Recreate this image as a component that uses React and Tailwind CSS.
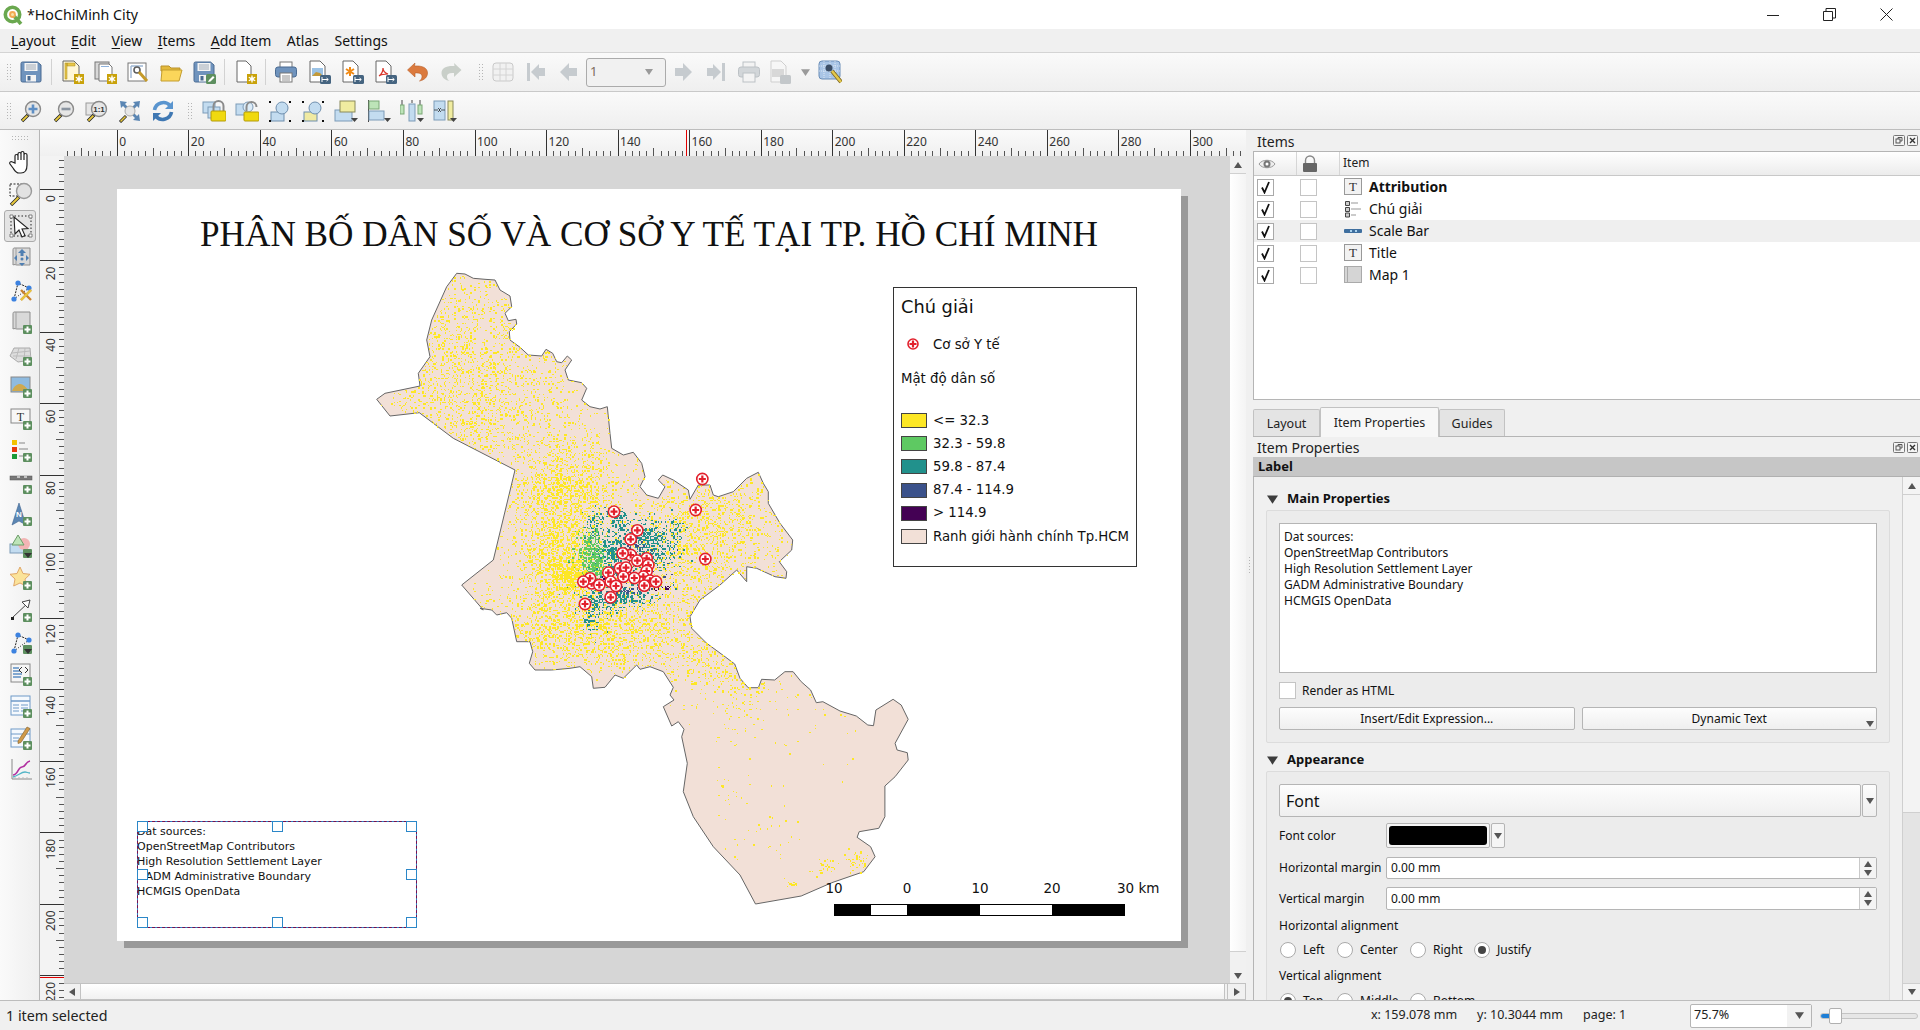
import React, { useMemo } from 'react';

// ---------- map geometry (traced from the layout page, absolute screen px) ----------
const north = [[290,40],[315,42],[340,55],[375,58],[405,60],[420,90],[450,108],[455,140],[435,160],[445,182],[468,178],[470,192],[448,215],[450,240],[480,262],[505,285],[545,288],[558,268],[578,280],[590,305],[605,308],[622,288],[635,300],[615,330],[625,360],[665,368],[680,385],[665,420],[690,440],[720,447],[742,440],[750,520],[755,565],[790,585],[820,577],[845,610],[855,650],[840,680],[860,705],[895,715],[915,680],[895,660],[908,645],[940,660],[985,690],[990,718],[1015,675],[1050,675],[1060,705],[1075,710],[1120,695],[1160,655],[1195,637],[1210,670],[1225,695],[1225,730],[1260,790],[1298,840],[1295,870],[1258,905],[1280,935],[1278,955],[1245,950],[1190,925],[1160,920],[1160,965],[1130,930],[1080,975],[1020,1020],[990,1070],[995,1105],[1040,1150],[1095,1190]].map(([x, y]) => [360 + x / 3, 260 + y / 3]);
const south = [[232,72],[245,115],[265,143],[290,143],[298,118],[330,120],[355,95],[375,95],[395,125],[418,150],[432,188],[448,185],[490,213],[530,228],[558,255],[572,257],[578,210],[620,178],[640,195],[657,238],[625,310],[630,330],[655,338],[657,360],[625,410],[600,438],[600,530],[585,565],[537,575],[532,592],[565,620],[576,650],[548,695],[470,728],[395,768],[283,792]].map(([x, y]) => [640 + x / 2.45, 640 + y / 3]);
const back = [[780,825],[700,740],[640,650],[610,575],[622,490],[605,410],[612,388],[595,365],[575,378],[550,320],[582,300],[570,285],[580,262],[550,215],[510,200],[480,208],[470,195],[430,235],[405,225],[375,262],[340,265],[335,230],[300,200],[270,205],[215,210],[165,210],[148,190],[158,155],[150,125],[110,125],[95,55],[80,38],[50,45],[35,30],[0,25]].map(([x, y]) => [480 + x / 3, 600 + y / 3]);
const west = [[370,1050],[305,975],[400,900],[465,630],[280,535],[178,458],[90,468],[50,418],[75,400],[180,378],[175,340],[210,290],[200,240],[215,180],[260,80]].map(([x, y]) => [360 + x / 3, 260 + y / 3]);
const boundary = [...north, ...south, ...back, ...west];

const markers = [[1027,657],[1007,750],[1036,897],[762,755],[832,811],[812,838],[812,885],[860,895],[865,915],[780,925],[860,933],[850,950],[870,962],[788,880],[832,902],[798,923],[745,938],[790,950],[823,954],[888,965],[853,977],[695,970],[752,965],[690,955],[670,965],[718,975],[768,978],[752,1012],[675,1032]].map(([x, y]) => [360 + x / 3, 260 + y / 3]);

const yellowSpots = [[480,400,55,60,1900],[440,340,35,40,500],[560,555,22,25,1200],[567,490,26,24,1100],[573,577,8,8,350],[570,630,50,24,1300],[640,630,40,22,600],[710,520,34,34,1100],[680,560,30,26,400],[730,650,22,24,260],[700,650,24,30,200],[800,700,40,30,70],[745,690,14,18,90],[856,860,7,5,40],[824,867,7,5,30],[791,883,4,2,14],[730,780,12,40,30],[760,835,20,20,30]];
const tealSpots = [[613,517,10,5,90],[643,533,15,8,220],[653,547,12,10,220],[610,553,8,10,220],[600,600,12,8,230],[627,597,15,5,130],[590,620,5,8,45],[677,530,5,7,30],[593,527,5,8,50],[630,565,22,14,200]];
const greenSpots = [[590,553,7,11,320],[597,567,5,6,110]];
const navySpots = [[623,590,12,2,40],[633,545,5,4,30],[640,575,14,8,60]];
const purpleSpots = [[660,587,5,1,18],[603,578,4,1,12]];

function makeRandom(seed) {
  let a = seed;
  return () => {
    a = (a + 0x6d2b79f5) | 0;
    let t = Math.imul(a ^ (a >>> 15), 1 | a);
    t = (t + Math.imul(t ^ (t >>> 7), 61 | t)) ^ t;
    return ((t ^ (t >>> 14)) >>> 0) / 4294967296;
  };
}

function inside(x, y) {
  let hit = false;
  for (let i = 0, j = boundary.length - 1; i < boundary.length; j = i++) {
    const [xi, yi] = boundary[i];
    const [xj, yj] = boundary[j];
    if (yi > y !== yj > y && x < ((xj - xi) * (y - yi)) / (yj - yi) + xi) hit = !hit;
  }
  return hit;
}

function scatter(spots, seed, uniform = 0) {
  const rand = makeRandom(seed);
  const gauss = () => Math.sqrt(-2 * Math.log(rand() + 1e-6)) * Math.cos(6.2832 * rand());
  let d = '';
  const put = (x, y) => {
    if (!inside(x, y)) return;
    const px = Math.round(x / 1.34) * 1.34 - 117;
    const py = Math.round(y / 1.34) * 1.34 - 189;
    d += `M${px.toFixed(1)} ${py.toFixed(1)}h1.4v1.4h-1.4z`;
  };
  spots.forEach(([cx, cy, sx, sy, n]) => {
    for (let i = 0; i < n; i++) put(cx + gauss() * sx, cy + gauss() * sy);
  });
  for (let i = 0; i < uniform; i++) put(375 + rand() * 420, 272 + rand() * 390);
  return d;
}

// ---------- small drawing helpers ----------
const PlusBadge = ({ x = 14, y = 15 }) => (
  <g>
    <rect x={x} y={y} width="9" height="9" rx="1" fill="#5d8f5f" />
    <path d={`M${x + 4.5} ${y + 1.5}v6M${x + 1.5} ${y + 4.5}h6`} stroke="#fff" strokeWidth="2" />
  </g>
);
const GearBadge = () => (
  <g>
    <rect x="14" y="14" width="10" height="10" fill="#c9a20a" />
    <path d="M19 15.5v7M15.8 17.2l6.4 3.6M22.2 17.2l-6.4 3.6" stroke="#fff" strokeWidth="1.3" />
    <circle cx="19" cy="19" r="1.8" fill="#fff" />
  </g>
);
const ExportBadge = () => (
  <g>
    <rect x="13" y="15" width="11" height="9" rx="1.5" fill="#456480" />
    <path d="M15 17v5M15 19.5h6M19.5 18l1.8 1.5-1.8 1.5" stroke="#fff" strokeWidth="1" fill="none" />
  </g>
);
const Lens = ({ children }) => (
  <g>
    <path d="M3 22l7-7" stroke="#222" strokeWidth="3.4" />
    <path d="M3.4 21.6l5-5" stroke="#e8c93e" strokeWidth="2" />
    <circle cx="14" cy="10" r="7.5" fill="#e6e6e6" stroke="#8a8a8a" strokeWidth="1.4" />
    {children}
  </g>
);
const Doc = ({ x = 4, y = 1, w = 14, h = 20, fill = '#fff' }) => (
  <path d={`M${x} ${y}h${w - 5}l5 5v${h - 5}h-${w}z`} fill={fill} stroke="#666" strokeWidth="1" />
);
const Floppy = ({ children }) => (
  <g>
    <path d="M2 3.5a1.5 1.5 0 0 1 1.5-1.5h15l3.5 3v15.5a1.5 1.5 0 0 1-1.5 1.5h-17a1.5 1.5 0 0 1-1.5-1.5z" fill="#6f93bd" stroke="#4a6b92" />
    <rect x="5.5" y="3" width="13" height="8" fill="#f4f4f4" />
    <path d="M7 5h10M7 7h10M7 9h10" stroke="#8e9aa8" strokeWidth=".8" />
    <rect x="7" y="15" width="10" height="6.5" fill="#f4f4f4" />
    <rect x="8.5" y="16" width="3" height="4.5" fill="#4a6b92" />
    {children}
  </g>
);
const NodeTriangle = ({ children }) => (
  <g>
    <path d="M5 21L9 5l11 5" fill="none" stroke="#222" strokeWidth="1" strokeDasharray="2 1" />
    <path d="M5 21l15-11" stroke="#222" strokeWidth="1" strokeDasharray="1 1.5" />
    <circle cx="9" cy="5" r="2.6" fill="#3c82e0" />
    <circle cx="20" cy="10" r="2.6" fill="#3c82e0" />
    <circle cx="5" cy="21" r="2.6" fill="#3c82e0" />
    {children}
  </g>
);
const MapSheet = () => (
  <g>
    <path d="M5 2h16v17H7.5c-2-1-3.5 0-3.5 0V4c0-1 .4-2 1-2z" fill="#d9d9d9" stroke="#8d8d8d" />
    <path d="M7 2v17" stroke="#9f9f9f" />
  </g>
);
const LockBody = ({ x = 9, y = 12 }) => (
  <g>
    <path d={`M${x + 2.5} ${y}v-5a5 5 0 0 1 10 0v5`} fill="none" stroke="#8b8b8b" strokeWidth="2" />
    <rect x={x} y={y} width="15" height="10" rx="1" fill="#f0d90f" stroke="#b49b0b" />
  </g>
);
const DropMark = () => <path d="M17 19h7l-3.5 4z" fill="#444" />;

const icons = {
  save: <Floppy />,
  newLayout: <g><Doc x="3" y="1" w="16" h="20" fill="#fff7d6" /><path d="M5 3h2v16H5zM7 3h8v3H7z" fill="#e9c648" stroke="#a58a1f" strokeWidth=".5" /><GearBadge /></g>,
  duplicate: <g><rect x="2" y="2" width="14" height="17" fill="#d8d8d8" stroke="#777" /><path d="M6 4h10l3 3v14H6z" fill="#fff" stroke="#777" /><path d="M8 6h8v1H8z" fill="#8fb3dd" /><GearBadge /></g>,
  manager: <g><rect x="2" y="3" width="18" height="18" fill="#fff" stroke="#777" /><path d="M5 6h12M5 6v12" stroke="#9db6d3" strokeWidth="1.4" /><circle cx="11" cy="10" r="3" fill="none" stroke="#5d5d5d" strokeWidth="1.6" /><path d="M13 12l8 9" stroke="#c59a28" strokeWidth="3" /></g>,
  open: <g><path d="M2 6h8l2 2h9v3H2z" fill="#e3b93b" stroke="#b9912a" /><path d="M3 10h20l-3 11H2z" fill="#fbd65a" stroke="#c39d2f" /></g>,
  saveAs: <Floppy><rect x="14" y="14" width="10" height="10" rx="1.5" fill="#5d8f5f" /><path d="M16 22l1-2 4-4 1.5 1.5-4 4z" fill="#fff" /></Floppy>,
  newTemplate: <g><Doc x="4" y="1" w="14" h="21" /><GearBadge /></g>,
  print: <g><rect x="6" y="2" width="12" height="6" fill="#fff" stroke="#777" /><rect x="1.5" y="7" width="21" height="10" rx="2.5" fill="#6f93bd" stroke="#4a6b92" /><rect x="6" y="13" width="12" height="9" fill="#fff" stroke="#777" /><path d="M8 16h8M8 18h8M8 20h8" stroke="#777" strokeWidth=".8" /></g>,
  exportImage: <g><Doc x="3" y="1" w="15" h="21" /><rect x="5" y="8" width="11" height="8" fill="#9cc3e6" /><path d="M5 16l4-4 4 1 3 3z" fill="#c39a3a" /><ExportBadge /></g>,
  exportSvg: <g><Doc x="3" y="1" w="15" h="21" /><path d="M10 7v9M6 9l8 5M14 9l-8 5" stroke="#f08a16" strokeWidth="2" /><ExportBadge /></g>,
  exportPdf: <g><Doc x="3" y="1" w="15" h="21" /><path d="M6 16c3-2 4-5 4-8 0 3 2 5 5 6-3 0-6 0-9 2z" fill="none" stroke="#d8342a" strokeWidth="1.2" /><ExportBadge /></g>,
  undo: <path d="M9 3L1.5 10 9 17v-4c5-.5 7 1 7 3.5 0 2-1 3.5-2.500 4.500 5-1 8-4 8-8 0-5-5-7.500-13-7z" fill="#db7a3e" stroke="#b85f2a" strokeWidth=".6" />,
  redo: <path d="M15 3l7.500 7L15 17v-4c-5-.5-7 1-7 3.500 0 2 1 3.500 2.500 4.500-5-1-8-4-8-8 0-5 5-7.500 13-7z" fill="#c9cfc9" />,
  atlas: <g><rect x="2" y="3" width="20" height="18" rx="3" fill="#f1f1f1" stroke="#c9c9c9" /><path d="M9 3v18M15 3v18M2 9h20M2 15h20" stroke="#d4d4d4" /></g>,
  first: <path d="M3 3h3v18H3zM7 12l8-8v4h6v8h-6v4z" fill="#c6cbcf" />,
  prev: <path d="M3 12l9-9v5h8v8h-8v5z" fill="#c6cbcf" />,
  next: <path d="M21 12l-9-9v5H4v8h8v5z" fill="#c6cbcf" />,
  last: <path d="M21 3h-3v18h3zM17 12l-8-8v4H3v8h6v4z" fill="#c6cbcf" />,
  printOff: <g fill="#d2d6d9" stroke="#bcc1c5"><rect x="6" y="2" width="12" height="6" fill="#f3f3f3" /><rect x="1.5" y="7" width="21" height="10" rx="2.5" /><rect x="6" y="13" width="12" height="9" fill="#f3f3f3" /></g>,
  exportOff: <g><path d="M3 1h10l5 5v16H3z" fill="#f6f6f6" stroke="#cfcfcf" /><rect x="4" y="9" width="12" height="8" fill="#d8d8d8" /><rect x="12" y="15" width="11" height="9" rx="1.5" fill="#c3c7ca" /></g>,
  atlasSettings: <g><rect x="1" y="1" width="21" height="18" rx="3" fill="#a9c5e6" stroke="#6b8eb8" /><path d="M6 1v18M12 1v18M17 1v18M1 6h21M1 11h21" stroke="#fff" strokeWidth=".6" strokeDasharray="1 1" /><circle cx="11" cy="8" r="3.500" fill="#3c4e66" /><path d="M14 11l9 11" stroke="#7a6420" strokeWidth="4" /><path d="M14 11l9 11" stroke="#e3c84a" strokeWidth="2.500" /></g>,
  zoomIn: <Lens><path d="M14 5.500v9M9.500 10h9" stroke="#5f8fc4" strokeWidth="2.600" /></Lens>,
  zoomOut: <Lens><path d="M9.500 10h9" stroke="#8a94a0" strokeWidth="2.600" /></Lens>,
  zoom100: <g><rect x="1" y="4" width="13" height="12" fill="#e6e6e6" stroke="#9a9a9a" /><Lens><text x="14" y="13" textAnchor="middle" fontSize="8" fontWeight="700" fontFamily="Liberation Sans" fill="#333">1:1</text></Lens></g>,
  zoomFull: <g><path d="M2 2l7 1-2 2 3 3-2 2-3-3-2 2zM22 2l-1 7-2-2-3 3-2-2 3-3-2-2zM22 22l-7-1 2-2-3-3 2-2 3 3 2-2z" fill="#5b86b3" /><circle cx="12" cy="12" r="5" fill="#e6e6e6" stroke="#aaa" /><path d="M2 23l6-6" stroke="#222" strokeWidth="3" /><path d="M2.500 22.500l5-5" stroke="#e8c93e" strokeWidth="1.600" /></g>,
  refresh: <g fill="none" strokeWidth="3.600"><path d="M3.500 11A9 9 0 0 1 19 6.500" stroke="#5a95cf" /><path d="M20.500 13A9 9 0 0 1 5 17.500" stroke="#3f78b3" /><path d="M22 2v8h-8z" fill="#5a95cf" stroke="none" /><path d="M2 22v-8h8z" fill="#3f78b3" stroke="none" /></g>,
  group: <g><rect x="1" y="3" width="12" height="11" fill="#c3dcf0" stroke="#7d9bb8" /><rect x="6" y="8" width="12" height="11" fill="#c3dcf0" stroke="#7d9bb8" /><LockBody /></g>,
  ungroup: <g><rect x="1" y="5" width="11" height="11" fill="#c3dcf0" stroke="#7d9bb8" /><circle cx="13" cy="8" r="5" fill="#dcecf8" stroke="#7d9bb8" /><path d="M11.500 12V8a5 5 0 0 1 10 0" fill="none" stroke="#8b8b8b" strokeWidth="2" /><rect x="9" y="13" width="15" height="9" rx="1" fill="#f0d90f" stroke="#b49b0b" /></g>,
  selectAll: <g><rect x="3" y="13" width="13" height="9" fill="#c3dcf0" stroke="#6f8fae" /><circle cx="14" cy="9" r="6" fill="#c3dcf0" stroke="#6f8fae" /><path d="M1 2h2v2H1zM21 2h2v2h-2zM1 21h2v2H1zM21 21h2v2h-2z" fill="#111" /></g>,
  selectInv: <g><rect x="3" y="13" width="13" height="9" fill="#f0eaa2" stroke="#6f8fae" /><circle cx="14" cy="9" r="6" fill="#c3dcf0" stroke="#6f8fae" /><path d="M1 2h2v2H1zM21 2h2v2h-2zM1 21h2v2H1zM21 21h2v2h-2z" fill="#111" /></g>,
  raise: <g><rect x="1" y="11" width="17" height="11" fill="#c3dcf0" stroke="#7d9bb8" /><rect x="6" y="2" width="15" height="11" fill="#f0eca0" stroke="#8a8a5a" /><DropMark /></g>,
  alignLeft: <g><path d="M1.500 1v22" stroke="#444" /><rect x="2" y="2" width="10" height="8" fill="#bde4b8" stroke="#7ba876" /><rect x="2" y="12" width="15" height="9" fill="#c3dcf0" stroke="#7d9bb8" /><DropMark /></g>,
  distribute: <g><path d="M2 1v7M12 1v3M20 1v5" stroke="#444" /><rect x="0" y="6" width="4" height="9" fill="#bde4b8" stroke="#7ba876" /><rect x="9" y="5" width="6" height="17" fill="#c3dcf0" stroke="#7d9bb8" /><rect x="18" y="6" width="4" height="9" fill="#bde4b8" stroke="#7ba876" /><DropMark /></g>,
  resize: <g><rect x="1" y="2" width="11" height="19" fill="#c3dcf0" stroke="#7d9bb8" /><rect x="15" y="2" width="5" height="19" fill="#f0eca0" stroke="#8a8a5a" /><path d="M1 11h4M12 11H8M5 9l2 2-2 2M8 9l-2 2 2 2" stroke="#333" fill="none" strokeWidth=".8" /><DropMark /></g>,
  hand: <path d="M6 13V6a1.500 1.500 0 0 1 3 0v4-6a1.500 1.500 0 0 1 3 0v6-7a1.500 1.500 0 0 1 3 0v7-5a1.500 1.500 0 0 1 3 0v10c0 5-2 8-6 8h-2c-3 0-4-2-6-5l-3-4c-1-2 1-3 2.500-2z" fill="#fff" stroke="#222" strokeWidth="1.200" />,
  zoomBox: <g><rect x="1" y="2" width="12" height="12" fill="none" stroke="#222" strokeDasharray="2 1.500" /><path d="M2 23l8-8" stroke="#222" strokeWidth="3.400" /><path d="M2.500 22.500l7-7" stroke="#e8c93e" strokeWidth="2" /><circle cx="15" cy="9" r="7.500" fill="#e2e2e2" stroke="#999" strokeWidth="1.400" /></g>,
  select: <g><rect x="2" y="2" width="20" height="20" fill="none" stroke="#222" strokeDasharray="1.500 2" /><path d="M1 1h3v3H1zM20 1h3v3h-3zM1 20h3v3H1zM20 20h3v3h-3z" fill="#fff" stroke="#555" strokeWidth=".7" /><path d="M5 3l1 17 4-4 3 7 3-1.500-3-6.500 6-.5z" fill="#fff" stroke="#222" strokeWidth="1.100" /></g>,
  moveContent: <g><MapSheet /><path d="M13 3l4 4h-2.500v3h-3V7H9zM13 20l-3-3h6zM5 12l3-3v6zM20 12l-3-3v6z" fill="#4f7fb2" /><circle cx="13" cy="13" r="1.500" fill="#4f7fb2" /></g>,
  editNodes: <NodeTriangle><path d="M12 12l10 10M22 12L12 22" stroke="#c8832f" strokeWidth="2.400" /><path d="M22 12L12 22" stroke="#e7c53f" strokeWidth="2.400" /></NodeTriangle>,
  addMap: <g><MapSheet /><PlusBadge /></g>,
  add3d: <g><path d="M5 6h16l1 12-13 2-8-6z" fill="#ddd" stroke="#aaa" /><path d="M10 6L7 17M16 6l-1 13M3 11l18-2M4 14l18 0" stroke="#bbb" fill="none" /><PlusBadge /></g>,
  addPicture: <g><rect x="2" y="3" width="19" height="15" fill="#8fbbe0" stroke="#888" /><path d="M3 17c2-5 5-7 8-7 3 0 6 3 9 7z" fill="#cfa94f" /><PlusBadge /></g>,
  addLabel: <g><rect x="2" y="3" width="19" height="14" fill="#f7f7f7" stroke="#888" /><text x="11.500" y="15" textAnchor="middle" fontSize="12" fontFamily="Liberation Serif" fill="#333">T</text><PlusBadge /></g>,
  addLegend: <g><rect x="3" y="2" width="5" height="5" fill="#f2c200" /><rect x="3" y="9" width="5" height="5" fill="#e63a0e" /><rect x="3" y="16" width="5" height="5" fill="#1a9a38" /><path d="M10 5h6M10 11h9M10 18h4" stroke="#aaa" strokeWidth="1.600" /><PlusBadge /></g>,
  addScale: <g><rect x="1" y="6" width="22" height="4" fill="#777" stroke="#555" strokeWidth=".5" /><path d="M8 7h3M15 7h3" stroke="#ddd" strokeWidth="1.400" /><PlusBadge /></g>,
  addNorth: <g><path d="M10 1l7 22-7-4-7 4z" fill="#5b86b3" stroke="#3f6590" strokeWidth=".6" /><text x="10" y="15" textAnchor="middle" fontSize="8" fontWeight="700" fontFamily="Liberation Sans" fill="#fff">N</text><PlusBadge /></g>,
  addShape: <g><rect x="1" y="10" width="17" height="9" fill="#c3dcf0" stroke="#7d9bb8" /><circle cx="15" cy="10" r="6" fill="#f2b4b4" /><path d="M9 1l6 10H3z" fill="#bde4b8" stroke="#6c9c68" /><rect x="14" y="15" width="9" height="9" rx="1" fill="#5d8f5f" /><path d="M15 19h8l-4 5z" fill="#333" /></g>,
  addMarker: <g><path d="M11 1l3 6.500 7 .8-5 4.800 1.300 7L11 17l-6.300 3 1.300-7L1 8.300l7-.8z" fill="#fbe39a" stroke="#e0a769" /><PlusBadge /></g>,
  addArrow: <g><path d="M3 20L20 4" stroke="#444" /><path d="M13 4l8-2-2 8z" fill="#fff" stroke="#444" /><rect x="2" y="19" width="3" height="3" fill="#222" /><PlusBadge /></g>,
  addNode: <NodeTriangle><rect x="14" y="15" width="9" height="9" rx="1" fill="#5d8f5f" /><path d="M15 19h8l-4 5z" fill="#333" /></NodeTriangle>,
  addHtml: <g><rect x="2" y="2" width="19" height="18" fill="#f5f5f5" stroke="#888" /><path d="M4 6h6M4 9h7M4 12h9M4 15h8" stroke="#5c8ec4" strokeWidth="1.600" /><path d="M13 5l-3 3 3 3M16 5l3 3-3 3" fill="none" stroke="#333" /><PlusBadge /></g>,
  addTable: <g><rect x="2" y="2" width="19" height="19" fill="#f5f9fd" stroke="#6f9ac8" /><path d="M2 7h19" stroke="#6f9ac8" strokeWidth="1.500" /><path d="M4 11h6M12 11h7M4 14h6M12 14h7M4 17h6M12 17h3" stroke="#6f9ac8" /><PlusBadge /></g>,
  addFixedTable: <g><rect x="2" y="3" width="19" height="18" fill="#f5f9fd" stroke="#6f9ac8" /><path d="M2 8h19M4 12h6M4 15h6" stroke="#6f9ac8" /><path d="M9 15l9-14 3 1.500-9 14-3 1z" fill="#d09a4a" stroke="#7c5a26" strokeWidth=".6" /><PlusBadge /></g>,
  addChart: <g><path d="M3 1v20h20" stroke="#888" fill="none" /><path d="M4 17c5 0 5-8 9-8 4 0 3-5 8-6" stroke="#b12fa0" strokeWidth="1.600" fill="none" /><path d="M4 19c5-1 8-5 12-5 2 0 3 1 5 1" stroke="#53b5c7" strokeWidth="1.300" fill="none" /><path d="M6 21v-2M10 21v-2M14 21v-2M18 21v-2" stroke="#bbb" /></g>,
};

const Icon = ({ name, size = 24, className = '' }) => (
  <svg width={size} height={size} viewBox="0 0 24 24" className={className}>{icons[name]}</svg>
);

const Tri = ({ dir = 'down', className = 'fill-[#555]', size = 8 }) => {
  const pts = { down: '0,1 8,1 4,7', up: '0,7 8,7 4,1', left: '7,0 7,8 1,4', right: '1,0 1,8 7,4' }[dir];
  return <svg width={size} height={size} viewBox="0 0 8 8" className={className}><polygon points={pts} /></svg>;
};

const Grip = ({ className = '' }) => (
  <div className={`grid grid-cols-2 gap-x-[2px] gap-y-[2px] ${className}`}>
    {Array.from({ length: 12 }).map((_, i) => <span key={i} className="w-px h-px bg-[#b5b5b5]" />)}
  </div>
);

const Sep = () => <div className="w-px h-[26px] bg-[#d2d2d2] mx-[3.5px]" />;

const Tool = ({ name, disabled, size = 24 }) => (
  <div className={`w-[33px] h-[33px] flex items-center justify-center shrink-0 ${disabled ? 'opacity-70' : ''}`}>
    <Icon name={name} size={size} />
  </div>
);

function TitleBar() {
  return (
    <div className="h-[29px] shrink-0 bg-white flex items-center">
      <svg width="20" height="20" viewBox="0 0 20 20" className="ml-[3px]">
        <circle cx="9.500" cy="9.500" r="7.200" fill="none" stroke="#6aa84f" strokeWidth="3.600" />
        <path d="M11 11l7 8" stroke="#6aa84f" strokeWidth="3.600" />
        <circle cx="9.500" cy="9.500" r="3.400" fill="#f3a953" />
        <circle cx="9.500" cy="9.500" r="1.500" fill="#f6e3a8" />
      </svg>
      <span className="ml-[4px] text-[14.2px] text-[#111]">*HoChiMinh City</span>
      <div className="ml-auto mr-[5px] flex">
        <div className="w-[57px] h-[29px] flex items-center justify-center">
          <svg width="12" height="12" viewBox="0 0 12 12"><path d="M0 6.500h12" stroke="#222" /></svg>
        </div>
        <div className="w-[57px] h-[29px] flex items-center justify-center">
          <svg width="13" height="13" viewBox="0 0 13 13"><path d="M.5 3.500h9v9h-9zM3 3.500V.5h9.500V10H9.500" fill="none" stroke="#222" /></svg>
        </div>
        <div className="w-[57px] h-[29px] flex items-center justify-center">
          <svg width="13" height="13" viewBox="0 0 13 13"><path d="M.5.5l12 12M12.500.5l-12 12" stroke="#222" /></svg>
        </div>
      </div>
    </div>
  );
}

function MenuBar() {
  const items = [['L', 'ayout'], ['E', 'dit'], ['V', 'iew'], ['I', 'tems'], ['A', 'dd Item'], ['', 'Atlas'], ['', 'Settings']];
  return (
    <div className="h-[24px] shrink-0 bg-[#f0f0f0] flex items-center gap-[15.500px] pl-[11px] text-[14px] text-[#111] border-b border-[#d4d4d4]">
      {items.map(([k, rest]) => (
        <span key={k + rest}><span className="underline underline-offset-2">{k}</span>{rest}</span>
      ))}
    </div>
  );
}

function MainToolbar() {
  return (
    <div className="h-[39px] shrink-0 bg-gradient-to-b from-[#fafafa] to-[#efefef] flex items-center border-b border-[#c9c9c9]">
      <Grip className="ml-[7px] mr-[3px]" />
      <Tool name="save" />
      <Sep />
      <Tool name="newLayout" />
      <Tool name="duplicate" />
      <Tool name="manager" />
      <Tool name="open" />
      <Tool name="saveAs" />
      <Sep />
      <Tool name="newTemplate" />
      <Sep />
      <Tool name="print" />
      <Tool name="exportImage" />
      <Tool name="exportSvg" />
      <Tool name="exportPdf" />
      <Tool name="undo" />
      <Tool name="redo" />
      <Grip className="ml-[12px] mr-[3px]" />
      <Tool name="atlas" />
      <Tool name="first" />
      <Tool name="prev" />
      <div className="w-[80px] h-[29px] ml-[1px] border border-[#ababab] rounded-[3px] bg-[#f1f1f1] flex items-center justify-between px-[3px] text-[13px] text-[#7d6a5c]">
        <span>1</span>
        <Tri className="fill-[#9a9a9a] mr-[9px]" />
      </div>
      <Tool name="next" />
      <Tool name="last" />
      <Tool name="printOff" />
      <div className="w-[24px] flex justify-start ml-[3px]"><Icon name="exportOff" /></div>
      <Tri className="fill-[#9a9a9a] ml-[9px] mr-[3.500px]" size={9} />
      <Tool name="atlasSettings" />
    </div>
  );
}

function ItemToolbar() {
  return (
    <div className="h-[38px] shrink-0 bg-gradient-to-b from-[#fafafa] to-[#efefef] flex items-center border-b border-[#bdbdbd]">
      <Grip className="ml-[7px] mr-[3px]" />
      <Tool name="zoomIn" />
      <Tool name="zoomOut" />
      <Tool name="zoom100" />
      <Tool name="zoomFull" />
      <Tool name="refresh" />
      <Grip className="ml-[9px] mr-[5px]" />
      <Tool name="group" />
      <Tool name="ungroup" />
      <Tool name="selectAll" />
      <Tool name="selectInv" />
      <Tool name="raise" />
      <Tool name="alignLeft" />
      <Tool name="distribute" />
      <Tool name="resize" />
    </div>
  );
}

function LeftToolbar() {
  const top = ['hand', 'zoomBox', 'select', 'moveContent', 'editNodes', 'addMap', 'add3d', 'addPicture', 'addLabel', 'addLegend', 'addScale', 'addNorth', 'addShape', 'addMarker', 'addArrow', 'addNode', 'addHtml', 'addTable', 'addFixedTable', 'addChart'];
  return (
    <div className="w-[40px] shrink-0 bg-gradient-to-r from-[#fafafa] to-[#efefef] border-r border-[#b5b5b5] flex flex-col items-center overflow-hidden">
      <div className="h-[16px] flex items-center shrink-0">
        <div className="grid grid-cols-6 gap-[2px]">
          {Array.from({ length: 12 }).map((_, i) => <span key={i} className="w-px h-px bg-[#b5b5b5]" />)}
        </div>
      </div>
      {top.map((n) => (
        <div
          key={n}
          className={`w-[32px] h-[32px] shrink-0 flex items-center justify-center rounded-[3px] ${n === 'select' ? 'bg-[#e4e4e4] border border-[#ababab]' : ''}`}
        >
          <Icon name={n} className="ml-[2px]" />
        </div>
      ))}
    </div>
  );
}

const MM = 3.577;

function TopRuler() {
  const ticks = [];
  for (let mm = -14; mm <= 316; mm += 2) {
    const x = 77.3 + mm * MM;
    if (x < 24) continue;
    const major = mm % 20 === 0;
    const mid = mm % 10 === 0;
    ticks.push(<line key={mm} x1={x} x2={x} y1={major ? 0 : mid ? 18 : 21} y2="26" stroke={major ? '#333' : '#555'} strokeWidth="1" />);
    if (major && mm >= 0) ticks.push(<text key={`t${mm}`} x={x + 2} y="16" fontSize="12" fill="#333">{mm}</text>);
  }
  return (
    <div className="h-[26px] shrink-0 bg-gradient-to-b from-[#fafafa] to-[#f0f0f0] overflow-hidden">
      <svg width="1206" height="26" shapeRendering="crispEdges">
        {ticks}
        <line x1="646.700" x2="646.700" y1="0" y2="26" stroke="#e00000" />
      </svg>
    </div>
  );
}

function LeftRuler() {
  const ticks = [];
  for (let mm = -8; mm <= 226; mm += 2) {
    const y = 33 + mm * MM;
    const major = mm % 20 === 0;
    const mid = mm % 10 === 0;
    ticks.push(<line key={mm} y1={y} y2={y} x1={major ? 0 : mid ? 16 : 19} x2="24" stroke={major ? '#333' : '#555'} />);
    if (major && mm >= 0) {
      ticks.push(
        <text key={`t${mm}`} transform={`translate(15 ${y + 6}) rotate(-90)`} textAnchor="end" fontSize="12" fill="#333">{mm}</text>
      );
    }
  }
  return (
    <div className="w-[24px] shrink-0 bg-[#f3f3f3] overflow-hidden">
      <svg width="24" height="844">
        <g shapeRendering="crispEdges">{ticks}</g>
        <line x1="0" x2="24" y1="821" y2="821" stroke="#e00000" shapeRendering="crispEdges" />
      </svg>
    </div>
  );
}

function MapLayer() {
  const paths = useMemo(() => ({
    yellow: scatter(yellowSpots, 11, 2300),
    green: scatter(greenSpots, 22),
    teal: scatter(tealSpots, 33),
    navy: scatter(navySpots, 44),
    purple: scatter(purpleSpots, 55),
  }), []);
  const outline = boundary.map(([x, y]) => `${(x - 117).toFixed(1)},${(y - 189).toFixed(1)}`).join(' ');
  return (
    <svg width="1064" height="752" className="absolute left-0 top-0">
      <polygon points={outline} fill="#f2e0d7" stroke="#666" strokeWidth="1" strokeLinejoin="round" />
      <path d={paths.yellow} fill="#fde725" shapeRendering="crispEdges" />
      <path d={paths.teal} fill="#21918c" shapeRendering="crispEdges" />
      <path d={paths.green} fill="#5ec962" shapeRendering="crispEdges" />
      <path d={paths.navy} fill="#3b528b" shapeRendering="crispEdges" />
      <path d={paths.purple} fill="#440154" shapeRendering="crispEdges" />
      {markers.map(([x, y], i) => <Marker key={i} x={x - 117} y={y - 189} />)}
    </svg>
  );
}

const Marker = ({ x, y, r = 5.600 }) => (
  <g>
    <circle cx={x} cy={y} r={r} fill="#fff" stroke="#e2202c" strokeWidth="1.600" />
    <path d={`M${x} ${y - 3.500}v7M${x - 3.500} ${y}h7`} stroke="#e2202c" strokeWidth="2.200" />
  </g>
);

function Legend() {
  const rows = [
    ['bg-[#fde725]', '<= 32.3'],
    ['bg-[#5ec962]', '32.3 - 59.8'],
    ['bg-[#21918c]', '59.8 - 87.4'],
    ['bg-[#3b528b]', '87.4 - 114.9'],
    ['bg-[#440154]', '> 114.9'],
    ['bg-[#f2e0d7]', 'Ranh giới hành chính Tp.HCM'],
  ];
  return (
    <div className="absolute left-[776px] top-[98px] w-[244px] h-[280px] bg-white border border-[#333] pl-[7px] text-[#111] font-['DejaVu_Sans',sans-serif] text-[13.300px]">
      <div className="h-[24px] mt-[7px] text-[17.800px] leading-[24px]">Chú giải</div>
      <div className="flex items-center h-[20px] mt-[16px]">
        <svg width="26" height="20" className="-mt-[3px]"><Marker x={12} y={10} r={5} /></svg>
        <span className="ml-[6px]">Cơ sở Y tế</span>
      </div>
      <div className="h-[20px] mt-[14px] leading-[20px]">Mật độ dân số</div>
      <div className="mt-[24px] flex flex-col gap-[8px]">
        {rows.map(([color, label]) => (
          <div key={label} className="flex items-center h-[15.200px]">
            <span className={`w-[26px] h-[15px] border border-[#444] shrink-0 ${color}`} />
            <span className="ml-[6px] whitespace-nowrap">{label}</span>
          </div>
        ))}
      </div>
    </div>
  );
}

function ScaleBar() {
  const labels = [['10', 717], ['0', 790], ['10', 863], ['20', 935]];
  return (
    <div className="absolute left-[717px] top-[689px] w-[330px] h-[40px] font-['DejaVu_Sans',sans-serif] text-[13.500px] text-[#111]">
      {labels.map(([t, x], i) => (
        <span key={i} className="absolute top-0 -translate-x-1/2" style={{ left: x - 717 }}>{t}</span>
      ))}
      <span className="absolute top-0 left-[283px] whitespace-nowrap">30 km</span>
      <div className="absolute left-0 top-[26px] w-[291px] h-[12px] flex border border-black">
        <span className="w-[36px] bg-black" />
        <span className="w-[36px] bg-white" />
        <span className="w-[73px] bg-black" />
        <span className="w-[72px] bg-white" />
        <span className="flex-1 bg-black" />
      </div>
    </div>
  );
}

const Handle = ({ className }) => <span className={`absolute w-[11px] h-[11px] bg-white border border-[#2b87c8] ${className}`} />;

function Attribution() {
  return (
    <div className="absolute left-[20px] top-[632px] w-[280px] h-[107px] font-['DejaVu_Sans',sans-serif] text-[11px] leading-[15px] text-[#111] pt-[3px]">
      <div>Dat sources:</div>
      <div>OpenStreetMap Contributors</div>
      <div>High Resolution Settlement Layer</div>
      <div>GADM Administrative Boundary</div>
      <div>HCMGIS OpenData</div>
      <div className="absolute inset-0 border border-[#2b87c8]" />
      <div className="absolute inset-0 border border-dashed border-[#7a0f4e]" />
      <Handle className="left-0 top-0" />
      <Handle className="left-[135px] top-0" />
      <Handle className="right-0 top-0" />
      <Handle className="left-0 top-[48px]" />
      <Handle className="right-0 top-[48px]" />
      <Handle className="left-0 bottom-0" />
      <Handle className="left-[135px] bottom-0" />
      <Handle className="right-0 bottom-0" />
    </div>
  );
}

function Canvas() {
  return (
    <div className="relative flex-1 bg-[#d6d6d6] overflow-hidden">
      <div className="absolute left-[53px] top-[33px] w-[1064px] h-[752px] bg-white shadow-[7px_7px_0_#999]">
        <div className="absolute left-0 right-0 top-[24px] text-center font-['Liberation_Serif',serif] text-[35.200px] leading-[44px] text-[#111] whitespace-nowrap">
          PHÂN BỐ DÂN SỐ VÀ CƠ SỞ Y TẾ TẠI TP. HỒ CHÍ MINH
        </div>
        <MapLayer />
        <Legend />
        <ScaleBar />
        <Attribution />
      </div>
    </div>
  );
}

function HScroll() {
  return (
    <div className="h-[17px] shrink-0 flex bg-[#f1f1f1] border-y border-[#c2c2c2]">
      <div className="w-[17px] flex items-center justify-center border-r border-[#c2c2c2]"><Tri dir="left" /></div>
      <div className="flex-1 bg-gradient-to-b from-white to-[#f1f1f1] border-r border-[#c2c2c2]" />
      <div className="w-[19px] flex items-center justify-center border-x border-[#c2c2c2] ml-[2px]"><Tri dir="right" /></div>
    </div>
  );
}

function VScroll() {
  return (
    <div className="w-[16px] shrink-0 flex flex-col bg-[#f1f1f1]">
      <div className="h-[17px] flex items-center justify-center"><Tri dir="up" /></div>
      <div className="flex-1 bg-gradient-to-r from-white to-[#f4f4f4] border-y border-[#d0d0d0]" />
      <div className="h-[16px]" />
      <div className="h-[15px] flex items-center justify-center"><Tri dir="down" /></div>
    </div>
  );
}

function CenterArea() {
  return (
    <div className="w-[1206px] shrink-0 flex flex-col">
      <TopRuler />
      <div className="flex-1 flex min-h-0">
        <LeftRuler />
        <div className="flex-1 flex flex-col min-w-0">
          <div className="flex-1 flex min-h-0">
            <Canvas />
            <VScroll />
          </div>
          <HScroll />
        </div>
      </div>
    </div>
  );
}

const DockButtons = () => (
  <div className="flex gap-[2px] items-center">
    <svg width="12" height="11" viewBox="0 0 12 11"><rect x=".5" y=".5" width="11" height="10" rx="1" fill="#f4f4f4" stroke="#777" /><rect x="3" y="4" width="4" height="4" fill="none" stroke="#555" /><path d="M5 4V2.500h4V6H7" fill="none" stroke="#555" /></svg>
    <svg width="11" height="11" viewBox="0 0 11 11"><rect x=".5" y=".5" width="10" height="10" rx="1" fill="#f4f4f4" stroke="#777" /><path d="M3 3l5 5M8 3l-5 5" stroke="#333" strokeWidth="1.400" /></svg>
  </div>
);

const Check = () => (
  <span className="w-[17px] h-[17px] bg-white border border-[#a9a9a9] flex items-center justify-center">
    <svg width="11" height="13" viewBox="0 0 11 13"><path d="M2 6.500l2.500 5L9 1" fill="none" stroke="#111" strokeWidth="1.800" /></svg>
  </span>
);

function ItemsPanel() {
  const rows = [
    { name: 'Attribution', icon: 'T', bold: true },
    { name: 'Chú giải', icon: 'legend' },
    { name: 'Scale Bar', icon: 'scale', active: true },
    { name: 'Title', icon: 'T' },
    { name: 'Map 1', icon: 'map' },
  ];
  const rowIcon = (t) => {
    if (t === 'T') return <svg width="18" height="18"><rect x=".5" y=".5" width="17" height="16" fill="#f2f2f2" stroke="#999" /><text x="9" y="13" textAnchor="middle" fontSize="13" fontFamily="Liberation Serif" fill="#333">T</text></svg>;
    if (t === 'legend') return <svg width="18" height="18"><path d="M1.500 1.500h4v4h-4zM1.500 7.500h4v4h-4zM1.500 13h4v4h-4z" fill="#ccc" stroke="#444" /><path d="M7 3h7M7 9h10M7 15h5" stroke="#bbb" strokeWidth="1.500" /></svg>;
    if (t === 'scale') return <svg width="18" height="18"><rect x="0" y="7" width="18" height="4" rx="1" fill="#3f6f9f" /><path d="M6 9h2M11 9h2" stroke="#a9d2ef" strokeWidth="2" /></svg>;
    return <svg width="18" height="18"><rect x=".5" y=".5" width="17" height="16" fill="#d5d5d5" stroke="#aaa" /><path d="M3.500 0v17" stroke="#aaa" /></svg>;
  };
  return (
    <div className="h-[270px] shrink-0 flex flex-col">
      <div className="h-[21px] shrink-0 flex items-center pl-[4px] pr-[2px] justify-between">
        <span className="text-[14px] text-[#222] pt-[2px]">Items</span>
        <DockButtons />
      </div>
      <div className="flex-1 bg-white border border-[#b5b5b5] border-r-0 flex flex-col overflow-hidden">
        <div className="h-[24px] shrink-0 flex bg-gradient-to-b from-white to-[#ececec] border-b border-[#c8c8c8] text-[12px] text-[#222]">
          <div className="w-[43px] flex items-center pl-[4px] border-r border-[#d6d6d6]">
            <svg width="18" height="14" viewBox="0 0 18 14"><path d="M1 7c3-5 13-5 16 0-3 5-13 5-16 0z" fill="#eee" stroke="#999" /><circle cx="9" cy="7" r="3.500" fill="#777" /><circle cx="9" cy="7" r="1.500" fill="#fff" /></svg>
          </div>
          <div className="w-[43px] flex items-center pl-[5px] border-r border-[#d6d6d6]">
            <svg width="16" height="18" viewBox="0 0 16 18"><path d="M3.500 9V5.500a4.500 4.500 0 0 1 9 0V9" fill="none" stroke="#888" strokeWidth="1.400" /><rect x="1" y="8" width="14" height="9" rx="1" fill="#666" /></svg>
          </div>
          <div className="flex items-center pl-[3px] pb-[2px]">Item</div>
        </div>
        {rows.map((r) => (
          <div key={r.name} className={`h-[22px] shrink-0 flex items-center text-[14px] text-[#111] ${r.active ? 'bg-[#efefef]' : ''}`}>
            <div className="w-[46px] pl-[3px]"><Check /></div>
            <div className="w-[44px]"><span className="block w-[17px] h-[17px] bg-white border border-[#c4c4c4]" /></div>
            <div className="w-[25px]">{rowIcon(r.icon)}</div>
            <span className={`pb-[2px] ${r.bold ? 'font-bold' : ''}`}>{r.name}</span>
          </div>
        ))}
      </div>
    </div>
  );
}

function Tabs() {
  return (
    <div className="h-[37px] shrink-0 pt-[7px] flex items-end border-b border-[#b5b5b5] relative text-[12.500px] text-[#222]">
      <div className="w-[67px] h-[27px] pt-[3px] bg-[#e4e4e4] border border-b-0 border-[#c2c2c2] rounded-t-[2px] flex items-center justify-center">Layout</div>
      <div className="w-[119px] h-[30px] pt-[2px] -mb-px bg-[#f7f7f7] border border-b-0 border-[#c2c2c2] rounded-t-[2px] flex items-center justify-center">Item Properties</div>
      <div className="w-[66px] h-[27px] pt-[3px] bg-[#e4e4e4] border border-b-0 border-[#c2c2c2] rounded-t-[2px] flex items-center justify-center">Guides</div>
    </div>
  );
}

const SectionHead = ({ title, className }) => (
  <div className={`h-[20px] ml-[13px] flex items-center ${className}`}>
    <Tri className="fill-[#3c3c3c]" size={11} />
    <span className="ml-[9px] text-[13px] font-bold text-[#111]">{title}</span>
  </div>
);

const Btn = ({ children, className = '' }) => (
  <div className={`relative h-[23px] flex items-center justify-center bg-gradient-to-b from-[#fdfdfd] to-[#efefef] border border-[#b5b5b5] rounded-[2px] text-[12px] text-[#111] ${className}`}>
    {children}
  </div>
);

const Spin = ({ label, className = '' }) => (
  <div className={`flex items-center text-[12px] text-[#111] ${className}`}>
    <span className="w-[107px]">{label}</span>
    <div className="flex-1 h-full bg-white border border-[#b5b5b5] rounded-[2px] flex items-center pl-[4px] justify-between">
      <span>0.00 mm</span>
      <div className="w-[17px] h-full border-l border-[#c9c9c9] bg-[#f4f4f4] flex flex-col items-center justify-center gap-[1px]">
        <Tri dir="up" size={8} />
        <Tri size={8} />
      </div>
    </div>
  </div>
);

const Radio = ({ label, on, className = '' }) => (
  <div className={`flex items-center ${className}`}>
    <span className="w-[16px] h-[16px] ml-[1px] rounded-full bg-white border border-[#aaa] flex items-center justify-center shrink-0">
      {on && <span className="w-[8px] h-[8px] rounded-full bg-[#444]" />}
    </span>
    <span className="ml-[7px]">{label}</span>
  </div>
);

function PropertiesPanel() {
  return (
    <div className="flex-1 flex flex-col min-h-0">
      <div className="h-[20px] shrink-0 flex items-center justify-between pl-[4px] pr-[2px]">
        <span className="text-[14px] text-[#222]">Item Properties</span>
        <DockButtons />
      </div>
      <div className="h-[20px] shrink-0 bg-[#c6c6c6] pl-[5px] flex items-center text-[13px] font-bold text-[#111] border-b border-[#b0b0b0]">Label</div>
      <div className="flex-1 flex min-h-0 border-l border-[#b5b5b5]">
        <div className="flex-1 overflow-hidden bg-[#f0f0f0]">
          <SectionHead title="Main Properties" className="mt-[12px]" />
          <div className="ml-[12px] w-[624px] mt-px h-[233px] bg-[#ececec] border border-[#dcdcdc] rounded-[2px] px-[12px] pt-[12px]">
            <div className="h-[150px] bg-white border border-[#b5b5b5] pl-[4px] pt-[5px] text-[12px] leading-[16px] text-[#111]">
              <div>Dat sources:</div>
              <div>OpenStreetMap Contributors</div>
              <div>High Resolution Settlement Layer</div>
              <div>GADM Administrative Boundary</div>
              <div>HCMGIS OpenData</div>
            </div>
            <div className="h-[17px] mt-[9px] flex items-center text-[12px] text-[#111]">
              <span className="w-[17px] h-[17px] bg-white border border-[#c4c4c4]" />
              <span className="ml-[6px]">Render as HTML</span>
            </div>
            <div className="mt-[8px] grid grid-cols-2 gap-[7px]">
              <Btn>Insert/Edit Expression...</Btn>
              <Btn>
                Dynamic Text
                <span className="absolute right-[2px] bottom-[1px]"><Tri size={8} /></span>
              </Btn>
            </div>
          </div>
          <SectionHead title="Appearance" className="mt-[7px]" />
          <div className="ml-[12px] w-[624px] mt-px h-[260px] bg-[#ececec] border border-[#dcdcdc] rounded-[2px] px-[12px] pt-[12px] text-[12px] text-[#111]">
            <div className="flex h-[33px]">
              <div className="flex-1 bg-gradient-to-b from-[#fdfdfd] to-[#efefef] border border-[#b5b5b5] rounded-[2px] pl-[6px] flex items-center text-[16px]">Font</div>
              <div className="w-[15px] ml-px bg-gradient-to-b from-[#fdfdfd] to-[#efefef] border border-[#b5b5b5] rounded-[2px] flex items-center justify-center"><Tri size={8} /></div>
            </div>
            <div className="flex items-center h-[25px] mt-[6px]">
              <span className="w-[107px] pt-[1px]">Font color</span>
              <div className="w-[104px] h-[25px] bg-[#f5f5f5] border border-[#b5b5b5] rounded-[2px] p-[2px]">
                <div className="w-full h-full bg-black rounded-[3px]" />
              </div>
              <div className="w-[14px] h-[25px] ml-px bg-[#f5f5f5] border border-[#b5b5b5] rounded-[2px] flex items-center justify-center"><Tri size={8} /></div>
            </div>
            <Spin label="Horizontal margin" className="h-[22px] mt-[9px]" />
            <Spin label="Vertical margin" className="h-[23px] mt-[8px]" />
            <div className="h-[18px] mt-[7px] leading-[18px]">Horizontal alignment</div>
            <div className="h-[18px] mt-[6px] flex">
              <Radio label="Left" className="w-[57px]" />
              <Radio label="Center" className="w-[73px]" />
              <Radio label="Right" className="w-[64px]" />
              <Radio label="Justify" on />
            </div>
            <div className="h-[18px] mt-[8px] leading-[18px]">Vertical alignment</div>
            <div className="h-[18px] mt-[7px] flex">
              <Radio label="Top" on className="w-[57px]" />
              <Radio label="Middle" className="w-[73px]" />
              <Radio label="Bottom" />
            </div>
          </div>
        </div>
        <div className="w-[18px] shrink-0 flex flex-col bg-[#e4e4e4] border-l border-[#cfcfcf]">
          <div className="h-[18px] shrink-0 bg-[#f4f4f4] border-b border-[#cfcfcf] flex items-center justify-center"><Tri dir="up" /></div>
          <div className="h-[318px] shrink-0 bg-[#f3f3f3] border-b border-[#cfcfcf]" />
          <div className="flex-1" />
          <div className="h-[17px] shrink-0 bg-[#f4f4f4] border-t border-[#cfcfcf] flex items-center justify-center"><Tri /></div>
        </div>
      </div>
    </div>
  );
}

function RightDock() {
  return (
    <div className="flex-1 flex flex-col min-w-0 bg-[#f0f0f0]">
      <ItemsPanel />
      <Tabs />
      <PropertiesPanel />
    </div>
  );
}

function StatusBar() {
  return (
    <div className="h-[30px] shrink-0 bg-[#f0f0f0] border-t border-[#bdbdbd] flex items-center text-[12.500px] text-[#222]">
      <span className="w-[1371px] pl-[6px] text-[14.300px]">1 item selected</span>
      <span className="w-[106px]">x: 159.078 mm</span>
      <span className="w-[106px]">y: 10.3044 mm</span>
      <span className="w-[107px]">page: 1</span>
      <div className="w-[122px] h-[24px] bg-white border border-[#b5b5b5] rounded-[2px] flex items-center justify-between pl-[3px]">
        <span>75.7%</span>
        <div className="w-[24px] h-full bg-[#f2f2f2] flex items-center justify-center"><Tri size={9} /></div>
      </div>
      <div className="relative ml-[8px] w-[98px] h-[6px] bg-[#e6e6e6] border border-[#c4c4c4] rounded-full">
        <span className="absolute left-0 top-0 w-[10px] h-full bg-[#1f7fd6] rounded-l-full" />
        <span className="absolute left-[8px] -top-[6px] w-[13px] h-[16px] bg-white border border-[#b0b0b0] rounded-[2px]" />
      </div>
    </div>
  );
}

export default function App() {
  return (
    <div className="w-[1920px] h-[1030px] flex flex-col overflow-hidden bg-[#f0f0f0] font-['Noto_Sans',sans-serif]">
      <TitleBar />
      <MenuBar />
      <MainToolbar />
      <ItemToolbar />
      <div className="flex-1 flex min-h-0">
        <LeftToolbar />
        <CenterArea />
        <div className="w-[7px] shrink-0 flex items-center justify-center">
          <div className="flex flex-col gap-[2px]">
            {Array.from({ length: 6 }).map((_, i) => <span key={i} className="w-px h-px bg-[#b5b5b5]" />)}
          </div>
        </div>
        <RightDock />
      </div>
      <StatusBar />
    </div>
  );
}
